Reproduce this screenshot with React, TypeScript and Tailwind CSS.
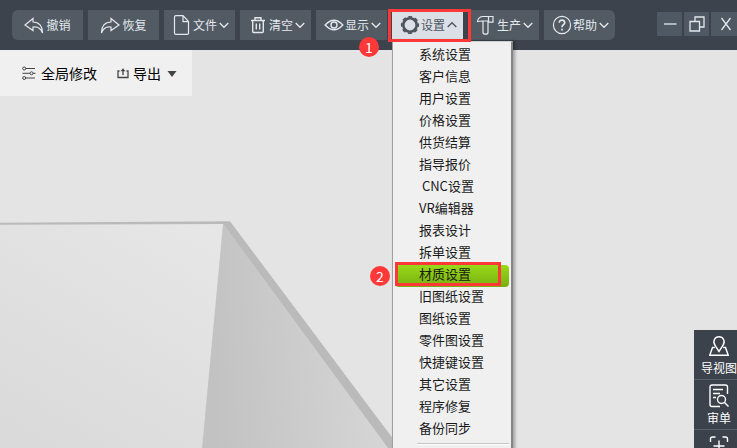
import React, { useState } from "react";

interface IconProps {
  className?: string;
}

interface ToolItem {
  id: string;
  label: string;
  icon: (props: IconProps) => React.ReactElement;
}

const stroke = {
  fill: "none",
  stroke: "currentColor",
  strokeLinejoin: "miter" as const,
  "aria-hidden": true,
};

function UndoIcon({ className }: IconProps) {
  return (
    <svg viewBox="0 0 20 20" strokeWidth="1.2" className={className} {...stroke}>
      <path d="M9 3.500 1 10l8 5.500V12c4.500-.6 7.700.7 9.500 6C18.700 11 15 7 9 7Z" />
    </svg>
  );
}

function RedoIcon({ className }: IconProps) {
  return (
    <svg viewBox="0 0 20 20" strokeWidth="1.2" className={className} {...stroke}>
      <path d="M11 3.500 19 10l-8 5.500V12c-4.500-.6-7.700.7-9.500 6C1.300 11 5 7 11 7Z" />
    </svg>
  );
}

function FileIcon({ className }: IconProps) {
  return (
    <svg viewBox="0 0 20 20" strokeWidth="1.2" className={className} {...stroke}>
      <path d="M3.900.6h7.100l5.500 6v11.400q0 1.400-1.400 1.400H3.900q-1.400 0-1.400-1.400V2q0-1.400 1.400-1.400ZM11 .6v6h5.500" />
    </svg>
  );
}

function TrashIcon({ className }: IconProps) {
  return (
    <svg viewBox="0 0 20 20" strokeWidth="1.400" className={className} {...stroke}>
      <path d="M3 5.500h14M7 5.200V2.700h6v2.500M4.700 5.500v11q0 1 1 1h8.600q1 0 1-1v-11M8.300 8.500v6M11.700 8.500v6" />
    </svg>
  );
}

function EyeIcon({ className }: IconProps) {
  return (
    <svg viewBox="0 0 20 20" strokeWidth="1.400" className={className} {...stroke}>
      <path d="M1.200 10Q10 .5 18.800 10 10 19.500 1.200 10Z" />
      <circle cx="10" cy="10" r="3" />
    </svg>
  );
}

function GearIcon({ className }: IconProps) {
  return (
    <svg viewBox="0 0 20 20" className={className} {...stroke}>
      <circle cx="10" cy="10" r="6.700" strokeWidth="2.600" />
      <circle cx="10" cy="10" r="8.300" strokeWidth="1.600" strokeDasharray="3.800 2.719" strokeDashoffset="1.900" />
    </svg>
  );
}

function HammerIcon({ className }: IconProps) {
  return (
    <svg viewBox="0 0 20 20" strokeWidth="1.200" className={className} {...stroke}>
      <path d="M1.500 6.500C2 3.500 4 1.500 7 1.500h10v5.700h-4.500v-1.200H6.500C4.500 6 3.200 6.200 1.500 6.500ZM12.500 1.500v4.500M7 6v11.500q0 1.700 2.500 1.700t2.500-1.700V6" />
    </svg>
  );
}

function HelpIcon({ className }: IconProps) {
  return (
    <svg viewBox="0 0 20 20" className={className} {...stroke}>
      <circle cx="10" cy="10" r="8.600" strokeWidth="1.200" />
      <path d="M7.300 7.800C7.300 4 12.900 4.300 12.700 7.700 12.600 9.700 10 9.800 10 12.300M10 13.700v1.800" strokeWidth="1.700" />
    </svg>
  );
}

function Chevron({ up }: { up?: boolean }) {
  return (
    <svg viewBox="0 0 10 10" strokeWidth="1.300" className="ml-0.5 size-2.5 shrink-0" {...stroke}>
      <path d={up ? "M.7 7 5 2.700 9.300 7" : "M.7 3 5 7.300 9.300 3"} />
    </svg>
  );
}

function SlidersIcon({ className }: IconProps) {
  return (
    <svg viewBox="0 0 14 14" strokeWidth="1" className={className} {...stroke}>
      <circle cx="2.200" cy="2.500" r="1.500" />
      <circle cx="9.500" cy="7.300" r="1.500" />
      <circle cx="2.200" cy="12" r="1.500" />
      <path d="M3.700 2.500H13M.5 7.300H8M11 7.300h2.500M3.700 12H13" />
    </svg>
  );
}

function ExportIcon({ className }: IconProps) {
  return (
    <svg viewBox="0 0 12 12" strokeWidth="1.300" className={className} {...stroke}>
      <path d="M2.500 4H1v6.500h10V4H9.500M6 8V3" />
      <path d="M3.500 4.200 6 1.200l2.500 3Z" fill="currentColor" stroke="none" />
    </svg>
  );
}

function GuideIcon({ className }: IconProps) {
  return (
    <svg viewBox="0 0 20 20" strokeWidth="1.400" className={className} {...stroke}>
      <path d="M5.800 11.500H3.500L.8 19.200h18.400l-2.700-7.700h-2.300" />
      <path d="M10 15.500 6.200 9.700C3 5 6 .8 10 .8s7 4.200 3.800 8.900Z" />
    </svg>
  );
}

function ReviewIcon({ className }: IconProps) {
  return (
    <svg viewBox="0 0 20 24" strokeWidth="1.400" className={className} {...stroke}>
      <path d="M18.500 10V3q0-2-2-2H3Q1 1 1 3v17.500q0 2 2 2h8M4 5.500h10M4 9.500h7M4 13.500h3" />
      <circle cx="12.500" cy="15.500" r="4" />
      <path d="m15.500 18.500 4 4" />
    </svg>
  );
}

function ScanIcon({ className }: IconProps) {
  return (
    <svg viewBox="0 0 20 20" strokeWidth="1.400" className={className} {...stroke}>
      <path d="M1.500 6V3q0-2 2-2h3M13.500 1h3q2 0 2 2v3M18.500 14v3q0 2-2 2h-3M6.500 19h-3q-2 0-2-2v-3M10 4.500v11M4.500 10h11" />
    </svg>
  );
}

const historyTools: ToolItem[] = [
  { id: "undo", label: "撤销", icon: UndoIcon },
  { id: "redo", label: "恢复", icon: RedoIcon },
];

const menuTools: ToolItem[] = [
  { id: "file", label: "文件", icon: FileIcon },
  { id: "clear", label: "清空", icon: TrashIcon },
  { id: "view", label: "显示", icon: EyeIcon },
  { id: "settings", label: "设置", icon: GearIcon },
  { id: "produce", label: "生产", icon: HammerIcon },
  { id: "help", label: "帮助", icon: HelpIcon },
];

const settingsMenu = [
  "系统设置",
  "客户信息",
  "用户设置",
  "价格设置",
  "供货结算",
  "指导报价",
  "\u00a0CNC设置",
  "VR编辑器",
  "报表设计",
  "拆单设置",
  "材质设置",
  "旧图纸设置",
  "图纸设置",
  "零件图设置",
  "快捷键设置",
  "其它设置",
  "程序修复",
  "备份同步",
];

const sideTools: ToolItem[] = [
  { id: "guide", label: "导视图", icon: GuideIcon },
  { id: "review", label: "审单", icon: ReviewIcon },
  { id: "scan", label: "", icon: ScanIcon },
];

function Step({ n, className }: { n: number; className: string }) {
  return (
    <span
      className={`absolute flex size-5 items-center justify-center rounded-full bg-[#fd3838] text-sm leading-5 text-white ${className}`}
    >
      {n}
    </span>
  );
}

function SettingsMenu() {
  const [selected, setSelected] = useState("材质设置");
  return (
    <ul className="absolute top-[31px] left-0 z-10 w-[121px] border-t border-r-2 border-l border-t-[#d0d0d0] border-r-[#858585] border-l-[#a0a0a0] bg-[#f0f0f0] px-0.5 pt-[3px] pb-2 text-[13px] leading-[18px] text-[#1a1a1a] shadow-[2px_0_3px_rgba(0,0,0,0.3)]">
      {settingsMenu.map((item) => (
        <li key={item} className="relative">
          <button
            onClick={() => setSelected(item)}
            className={`block h-[22px] w-full pb-1 pl-6 text-left whitespace-nowrap ${
              item === selected
                ? "rounded bg-linear-to-b from-[#98da18] to-[#78b010]"
                : ""
            }`}
          >
            {item}
          </button>
          {item === selected && (
            <>
              <span className="pointer-events-none absolute -top-[3px] left-0 h-6 w-[106px] border-3 border-[#fd3838]" />
              <Step n={2} className="top-px -left-[25px]" />
            </>
          )}
        </li>
      ))}
      <li className="mt-0.5 ml-[22px] border-t border-b border-t-[#c4c4c4] border-b-white" />
    </ul>
  );
}

function Header() {
  const [open, setOpen] = useState("settings");
  return (
    <header className="relative z-10 flex h-[50px] shrink-0 items-start justify-between bg-[#3c434d] pl-3 text-xs text-[#e3e8ed]">
      <nav className="flex gap-[5px] pt-2.5">
        {historyTools.map(({ id, label, icon: Icon }) => (
          <button
            key={id}
            className="flex h-[30px] w-[71px] items-center justify-center gap-0.5 bg-[#525b64] first:rounded-l-md"
          >
            <Icon className="size-5" />
            {label}
          </button>
        ))}
        {menuTools.map(({ id, label, icon: Icon }) => {
          const active = id === open;
          return (
            <div key={id} className="group relative">
              <button
                onClick={() => setOpen(active ? "" : id)}
                className={`flex h-[30px] w-[71px] items-center pl-2 group-last:rounded-r-md ${
                  active ? "bg-[#dbe0e6] text-[#4c555e]" : "bg-[#525b64]"
                }`}
              >
                <Icon className="mr-px size-5 shrink-0" />
                {label}
                <Chevron up={active} />
              </button>
              {active && id === "settings" && (
                <>
                  <SettingsMenu />
                  <span className="pointer-events-none absolute -top-px -left-1 z-20 h-[33px] w-[83px] border-3 border-[#fd3838]" />
                  <Step n={1} className="top-[27px] -left-[33px]" />
                </>
              )}
            </div>
          );
        })}
      </nav>
      <div className="flex gap-0.5 pt-3">
        <button aria-label="最小化" className="flex h-6 w-[25px] items-center justify-center bg-[#4e5963]">
          <svg viewBox="0 0 16 16" strokeWidth="1.300" className="size-4" {...stroke}>
            <path d="M2 8h12.500" />
          </svg>
        </button>
        <button aria-label="还原" className="flex h-6 w-[25px] items-center justify-center bg-[#4e5963]">
          <svg viewBox="0 0 16 16" strokeWidth="1.300" className="size-4" {...stroke}>
            <path d="M1 5.500h9.500V15H1ZM6 5.500V1h9v10h-4.500" />
          </svg>
        </button>
        <button aria-label="关闭" className="flex h-6 w-[26px] items-center justify-center bg-[#4e5963]">
          <svg viewBox="0 0 16 16" strokeWidth="1.300" className="ml-1 size-4" {...stroke}>
            <path d="m3.500 2 9 12M12.500 2l-9 12" />
          </svg>
        </button>
      </div>
    </header>
  );
}

function Cabinet() {
  return (
    <svg
      viewBox="0 0 737 398"
      preserveAspectRatio="xMinYMin slice"
      className="absolute inset-0 size-full"
      aria-hidden="true"
    >
      <defs>
        <linearGradient id="front" x1="0.8" y1="0" x2="0.2" y2="1">
          <stop offset="0" stopColor="#e6e6e6" />
          <stop offset="1" stopColor="#dadada" />
        </linearGradient>
        <linearGradient id="side" x1="0" y1="0.1" x2="1" y2="0">
          <stop offset="0" stopColor="#c2c2c2" />
          <stop offset="1" stopColor="#d8d8d8" />
        </linearGradient>
      </defs>
      <path d="M0 174h223l-21 224H0Z" fill="url(#front)" />
      <path d="M223 174 388 398H202Z" fill="url(#side)" />
      <path d="M0 172.800 230 171.300 400 398H388L223 174 0 174.700Z" fill="#bababa" />
    </svg>
  );
}

export default function App() {
  return (
    <div className="flex h-screen flex-col overflow-hidden bg-[#e4e4e4] font-['Noto_Sans_CJK_SC',sans-serif]">
      <Header />
      <main className="relative flex min-h-0 flex-1 items-start justify-between">
        <Cabinet />
        <div className="relative flex h-[46px] w-48 items-center bg-[#f0f0f0] pl-[22px] text-sm text-black">
          <button className="flex items-center gap-[5px]">
            <SlidersIcon className="size-3.5 text-[#444]" />
            全局修改
          </button>
          <button className="ml-5 flex items-center gap-1">
            <ExportIcon className="size-3 text-[#444]" />
            导出
            <svg viewBox="0 0 10 6" className="mt-0.5 ml-0.5 h-1.5 w-2.5 fill-[#444]" aria-hidden="true">
              <path d="M.5 0h9L5 6Z" />
            </svg>
          </button>
        </div>
        <aside className="relative mt-70 w-[43px] overflow-hidden bg-[#3b424c] text-xs text-white">
          {sideTools.map(({ id, label, icon: Icon }) => (
            <button
              key={id}
              className="flex h-[50px] w-[50px] flex-col items-center justify-between border-b border-[#59616b] pt-1 pb-0.5 leading-[18px]"
            >
              <Icon className="h-6 w-5" />
              {label}
            </button>
          ))}
        </aside>
      </main>
    </div>
  );
}
